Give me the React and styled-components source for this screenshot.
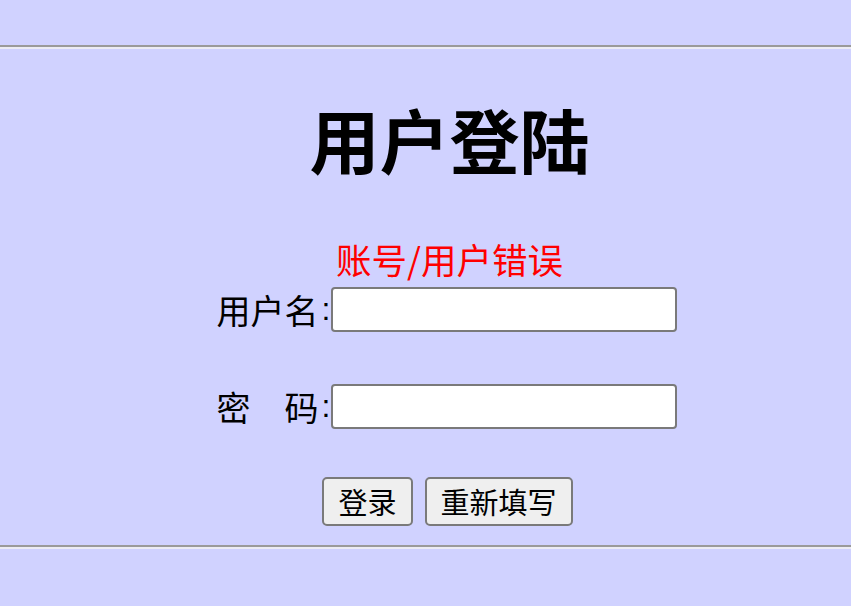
import React from "react";
import styled, { createGlobalStyle } from "styled-components";

const Global = createGlobalStyle`
  html, body { margin: 0; padding: 0; background: #d0d2ff; }
  body { font-family: "Noto Sans CJK SC", "Noto Sans", sans-serif; color: #000; }
`;

const Page = styled.div`
  padding-top: 45px;
  min-height: 606px;
  box-sizing: border-box;
`;

const Rule = styled.hr`
  margin: 0;
  height: 0;
  border: none;
  border-top: 2px solid #9a9a9a;
  border-bottom: 2px solid #ececf4;
`;

const Content = styled.form`
  display: flex;
  flex-direction: column;
  align-items: center;
  padding-left: 48px;
  padding-top: 55px;
  padding-bottom: 19px;
  margin: 0;
`;

const Title = styled.h1`
  margin: 0;
  font-size: 70px;
  line-height: 70px;
  font-weight: 700;
`;

const ErrorText = styled.div`
  margin-top: 67px;
  color: #ff0000;
  font-size: 35.5px;
  line-height: 35px;
`;

const Row = styled.div`
  display: flex;
  align-items: center;
  height: 45px;
  margin-top: ${(p) => p.$gap}px;
  margin-right: 5px;
`;

const Label = styled.label`
  display: flex;
  align-items: center;
  font-size: 34px;
  line-height: 45px;
  white-space: pre;
`;

const Spacer = styled.span`
  display: inline-block;
  width: 34px;
`;

const Colon = styled.span`
  font-family: "Liberation Sans", sans-serif;
  font-size: 32px;
  margin-left: 3px;
  margin-right: 1px;
`;

const Input = styled.input`
  width: 346px;
  height: 45px;
  box-sizing: border-box;
  border: 2px solid #7a7a7a;
  border-radius: 4px;
  background: #fff;
  font-size: 28px;
  padding: 0 6px;
  margin: 0;
`;

const Buttons = styled.div`
  display: flex;
  gap: 12px;
  margin-top: 48px;
  margin-right: 4px;
`;

const Button = styled.button`
  height: 49px;
  padding: 0 14px;
  box-sizing: border-box;
  border: 2px solid #7a7a7a;
  border-radius: 5px;
  background: #efefef;
  font-family: "Noto Sans CJK SC", sans-serif;
  font-size: 29px;
  line-height: 1;
  color: #000;
`;

export default function App() {
  return (
    <>
      <Global />
      <Page>
        <Rule />
        <Content onSubmit={(e) => e.preventDefault()}>
          <Title>用户登陆</Title>
          <ErrorText>账号/用户错误</ErrorText>
          <Row $gap={11}>
            <Label>用户名<Colon>:</Colon></Label>
            <Input type="text" />
          </Row>
          <Row $gap={52}>
            <Label>密<Spacer />码<Colon>:</Colon></Label>
            <Input type="password" />
          </Row>
          <Buttons>
            <Button type="submit">登录</Button>
            <Button type="reset">重新填写</Button>
          </Buttons>
        </Content>
        <Rule />
      </Page>
    </>
  );
}
